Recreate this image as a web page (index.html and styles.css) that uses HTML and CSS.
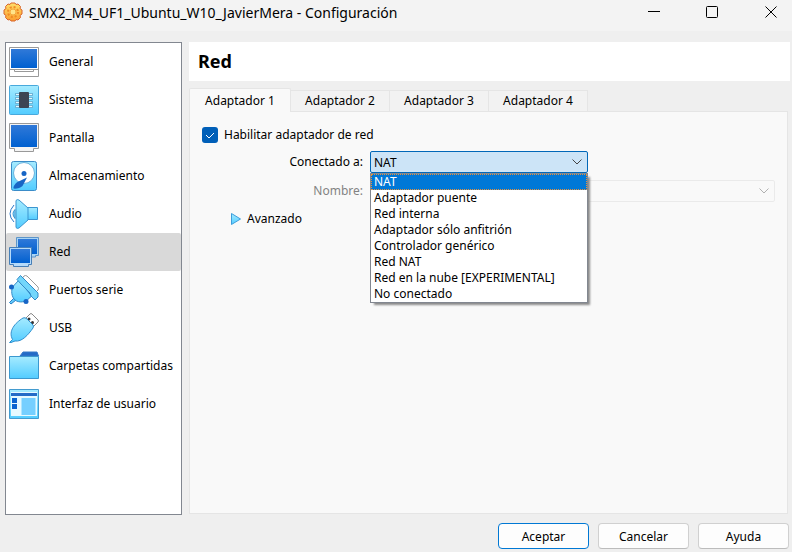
FILE: index.html
```html
<!DOCTYPE html>
<html lang="es">
<head>
<meta charset="utf-8">
<meta name="viewport" content="width=device-width, initial-scale=1">
<title>SMX2_M4_UF1_Ubuntu_W10_JavierMera - Configuración</title>
<link rel="stylesheet" href="styles.css">
</head>
<body>
<svg class="defs" aria-hidden="true">
  <defs>
    <linearGradient id="sky" x1="0" y1="0" x2="0" y2="1"><stop offset="0" stop-color="#a6ebff"/><stop offset="1" stop-color="#52ccff"/></linearGradient>
    <linearGradient id="blue" x1="0" y1="0" x2="0" y2="1"><stop offset="0" stop-color="#3079d8"/><stop offset="1" stop-color="#0060d0"/></linearGradient>
    <linearGradient id="gold" x1="0" y1="0" x2="0" y2="1"><stop offset="0" stop-color="#ffdf6a"/><stop offset="1" stop-color="#fb9e30"/></linearGradient>
  </defs>
</svg>
<div class="window">
  <header class="titlebar">
    <svg class="app-icon" viewBox="0 0 20 20" aria-hidden="true">
      <path d="M8 1h4l1 1.500 2-.5 2.500 2.500-.5 2L19 8v4l-2 1.500.5 2L15 18l-2-.5-1 1.500H8l-1-1.500-2 .5-2.500-2.500.5-2L1 12V8l2-1.500-.5-2L5 2l2 .5z" fill="url(#gold)" stroke="#d9652a" stroke-linejoin="round"/>
      <circle cx="10" cy="10" r="5" fill="none" stroke="#f08a24" stroke-width="2" stroke-dasharray="2 1.930"/>
      <circle cx="10" cy="10" r="3" fill="#ffe48a" stroke="#f5a83c"/>
    </svg>
    <h1 class="title">SMX2_M4_UF1_Ubuntu_W10_JavierMera - Configuración</h1>
    <div class="window-controls">
      <button type="button" aria-label="Minimizar"><svg viewBox="0 0 12 12"><path d="M0 5.500h12"/></svg></button>
      <button type="button" aria-label="Maximizar"><svg viewBox="0 0 12 12"><rect x=".5" y=".5" width="11" height="11" rx="1"/></svg></button>
      <button type="button" aria-label="Cerrar"><svg viewBox="0 0 12 12"><path d="M.5.5l11 11M11.500.5l-11 11"/></svg></button>
    </div>
  </header>

  <div class="body">
    <nav class="sidebar" aria-label="Secciones">
      <a href="#general"><svg viewBox="0 0 30 30"><path d="M.5.5h29v29H.5z" fill="#fff" stroke="#999"/><path d="M2 2h26v19H2z" fill="url(#blue)"/><path d="M1 22.500h28M5.500 22.500v2h19v-2" fill="none" stroke="#999"/></svg>General</a>
      <a href="#sistema"><svg viewBox="0 0 30 30"><rect x=".5" y=".5" width="29" height="29" rx="1" fill="url(#sky)" stroke="#48a9dc"/><path d="M6 9.500h18M6 13.500h18M6 17.500h18M6 21.500h18" stroke="#6fb4d6" stroke-width="3"/><path d="M7 9.500h16M7 13.500h16M7 17.500h16M7 21.500h16" stroke="#e6f8ff"/><rect x="10" y="7" width="10" height="16" rx="1" fill="#3d4553"/></svg>Sistema</a>
      <a href="#pantalla"><svg viewBox="0 0 30 30"><path d="M.5.5h29v25h-5v3h-19v-3h-5z" fill="#f4f4f4" stroke="#999"/><path d="M2 2h26v22H2z" fill="url(#blue)"/></svg>Pantalla</a>
      <a href="#almacenamiento"><svg viewBox="0 0 30 30"><rect x="2.500" y=".5" width="25" height="29" rx="2" fill="url(#sky)" stroke="#3b8cc8"/><circle cx="15" cy="12" r="10.500" fill="#fff" stroke="#6ab2dd"/><circle cx="15" cy="12.500" r="2.500" fill="#1765c5"/><path d="M18 16.500L13.500 25c-1.500 2-7 3-9 2.500-.5-2 2-5.500 4-6.500z" fill="#1765c5"/></svg>Almacenamiento</a>
      <a href="#audio"><svg viewBox="0 0 30 30"><path d="M18 8.500h10.500v12H18z" fill="url(#sky)" stroke="#3b95d0"/><path d="M7 1.500q1-1.500 3-.5l9 8v12l-9 8q-2 1-3-.5z" fill="url(#sky)" stroke="#3b95d0"/><path d="M6 10.500q-4 4 0 9z" fill="#92dfff" stroke="#3b95d0"/><path d="M5 6q-8 9 0 17" fill="none" stroke="#2d78c8"/></svg>Audio</a>
      <a href="#red" class="selected" aria-current="page"><svg viewBox="0 0 30 30"><path d="M7.500.5h22v18h-3v1.500h-16v-1.500h-3z" fill="#a8d4f5" stroke="#5e95c8"/><path d="M9 2h19v15H9z" fill="url(#blue)"/><path d="M.5 10.500h22v17h-3v2h-15v-2h-4z" fill="#b5dafa" stroke="#477fb7"/><path d="M2 12h19v14H2z" fill="url(#blue)"/></svg>Red</a>
      <a href="#puertos"><svg viewBox="0 0 30 30"><path d="M13 3.500l2-2.500q1.500-1 3 0l11 11q1 1.500 0 3l-2 2z" fill="#fff" stroke="#999"/><path d="M5 23l-4.500 4.500 1.500 1.500L7 25" fill="#60c9fa" stroke="#287fc7"/><path d="M10 5L3.500 12c-2 6 0 12 4 14 5 2 10 1 15-5z" fill="url(#sky)" stroke="#318ac8"/><path d="M8 4.500L11.500.5 29 18v4l-3 3-4-4-1-3L12 9z" fill="#72d6fb" stroke="#318ac8" stroke-linejoin="round"/><circle cx="2.500" cy="12" r="2.500" fill="#1765c5"/><circle cx="17" cy="26.500" r="2.500" fill="#1765c5"/></svg>Puertos serie</a>
      <a href="#usb"><svg viewBox="0 0 30 30"><path d="M16 6l5-5q1-1 2 0l6 6q1 1 0 2l-5 5z" fill="#fff" stroke="#888"/><circle cx="20" cy="6" r="1.500" fill="#333"/><circle cx="23.500" cy="9.500" r="1.500" fill="#333"/><path d="M.5 29.500l3-3C-1 18 6 10 14 5q2-1 4 1l6 6q1 1 0 3c-5 7-11 14-18 13l-4 1.500z" fill="url(#sky)" stroke="#318fce"/></svg>USB</a>
      <a href="#carpetas"><svg viewBox="0 0 30 30"><path d="M11 5l3-4h14l1.500 4z" fill="#246bc7" stroke="#3479c8"/><path d="M.5 5.500h29v22H.5z" fill="url(#sky)" stroke="#3b98cf"/></svg>Carpetas compartidas</a>
      <a href="#interfaz"><svg viewBox="0 0 30 30"><path d="M.5.5h29v29H.5z" fill="url(#sky)" stroke="#439bcf"/><path d="M2 3h26v24H2z" fill="#e5f9ff"/><path d="M2 4h26v3H2z" fill="#246bc7"/><path d="M3 9h5v5H3zM3 15h5v5H3z" fill="#0864d0"/><path d="M12.500 9h14v17h-14z" fill="#75cfff"/></svg>Interfaz de usuario</a>
    </nav>

    <main class="content">
      <h2 class="heading">Red</h2>
      <div class="tabs" role="tablist">
        <button type="button" role="tab" aria-selected="true">Adaptador 1</button>
        <button type="button" role="tab" aria-selected="false">Adaptador 2</button>
        <button type="button" role="tab" aria-selected="false">Adaptador 3</button>
        <button type="button" role="tab" aria-selected="false">Adaptador 4</button>
      </div>
      <section class="panel" role="tabpanel">
        <label class="enable"><input type="checkbox" checked>Habilitar adaptador de red</label>
        <div class="form">
          <label for="attached">Conectado a:</label>
          <div class="combo open">
            <select id="attached"><option>NAT</option></select>
            <svg class="chevron" viewBox="0 0 10 6"><path d="M.5.5L5 5 9.500.5"/></svg>
            <ul class="menu" role="listbox" aria-label="Conectado a">
              <li role="option" aria-selected="true">NAT</li>
              <li role="option">Adaptador puente</li>
              <li role="option">Red interna</li>
              <li role="option">Adaptador sólo anfitrión</li>
              <li role="option">Controlador genérico</li>
              <li role="option">Red NAT</li>
              <li role="option">Red en la nube [EXPERIMENTAL]</li>
              <li role="option">No conectado</li>
            </ul>
          </div>
          <label for="name" class="disabled">Nombre:</label>
          <div class="combo">
            <select id="name" disabled></select>
            <svg class="chevron" viewBox="0 0 10 6"><path d="M.5.5L5 5 9.500.5"/></svg>
          </div>
        </div>
        <button type="button" class="advanced" aria-expanded="false"><svg viewBox="0 0 10 12"><path d="M.5.5L9.500 6l-9 5.500z" fill="url(#sky)" stroke="#3d9ddb"/></svg>Avanzado</button>
      </section>
    </main>
  </div>

  <footer class="actions">
    <button type="button" class="primary">Aceptar</button>
    <button type="button">Cancelar</button>
    <button type="button">Ayuda</button>
  </footer>
</div>
</body>
</html>
```
FILE: styles.css
```css
* {
  box-sizing: border-box;
}

body {
  margin: 0;
  background: #efefef;
  color: #000;
  font: 12px/18px "Noto Sans", sans-serif;
}

button,
select {
  font: inherit;
  color: inherit;
}

.defs {
  position: absolute;
  width: 0;
  height: 0;
}

.window {
  display: flex;
  flex-direction: column;
  min-height: 100vh;
}

/* Title bar */
.titlebar {
  display: flex;
  align-items: flex-start;
  height: 31px;
  padding-left: 3px;
  background: #f3f3f3;
}

.app-icon {
  width: 20px;
  height: 20px;
  margin: 2px 6px 0 0;
}

.title {
  flex: 1;
  margin: 0;
  font: 14px/26px "Noto Sans", sans-serif;
  white-space: nowrap;
}

.window-controls {
  display: flex;
}

.window-controls button {
  display: grid;
  place-items: center;
  width: 58px;
  height: 24px;
  padding: 0;
  border: 0;
  background: none;
}

.window-controls button:last-child {
  width: 43px;
  margin-left: 8px;
}

.window-controls svg {
  width: 12px;
  height: 12px;
  fill: none;
  stroke: #000;
}

/* Section list and page */
.body {
  display: flex;
  flex: 1;
  gap: 7px;
  padding: 11px 2px 0 5px;
}

.sidebar {
  flex: 0 0 177px;
  border: 1px solid #828790;
  background: #fff;
}

.sidebar a {
  display: flex;
  align-items: center;
  gap: 10px;
  height: 38px;
  padding-left: 3px;
  border-radius: 2px;
  color: #000;
  line-height: 38px;
  text-decoration: none;
  white-space: nowrap;
}

.sidebar svg {
  width: 30px;
  height: 30px;
}

.sidebar .selected {
  background: #d9d9d9;
}

.content {
  display: flex;
  flex: 1;
  flex-direction: column;
}

.heading {
  margin: 0 0 7px;
  padding-left: 9px;
  background: #fff;
  font-size: 18px;
  line-height: 39px;
}

.tabs {
  display: flex;
  align-items: flex-end;
  height: 24px;
  margin-bottom: -1px;
}

.tabs button {
  width: 99px;
  height: 22px;
  padding: 0;
  border: 1px solid #e5e5e5;
  border-left: 0;
  background: #f2f2f2;
}

.tabs [aria-selected="true"] {
  z-index: 1;
  width: 102px;
  height: 24px;
  border-left: 1px solid #e5e5e5;
  border-bottom: 0;
  border-radius: 2px 2px 0 0;
  background: #f9f9f9;
}

.panel {
  flex: 1;
  margin: 0 2px 1px 0;
  padding: 14px 12px;
  border: 1px solid #e5e5e5;
  background: #f9f9f9;
}

.enable {
  display: flex;
  align-items: center;
  gap: 6px;
}

.enable input {
  appearance: none;
  width: 16px;
  height: 16px;
  margin: 0;
  border-radius: 3px;
  background: #005fb8 url("data:image/svg+xml,%3Csvg xmlns='http://www.w3.org/2000/svg' viewBox='0 0 16 16'%3E%3Cpath d='M4 8l3 3 5-5' fill='none' stroke='white'/%3E%3C/svg%3E");
}

.form {
  display: grid;
  grid-template-columns: 161px 1fr;
  gap: 7px;
  align-items: center;
  margin-top: 7px;
}

.form > label {
  line-height: 22px;
  text-align: right;
}

.form .disabled {
  color: #838383;
}

.combo {
  position: relative;
  height: 22px;
}

.combo select {
  display: block;
  appearance: none;
  width: 100%;
  height: 100%;
  padding: 1px 3px 0;
  border: 1px solid #e5e5e5;
  border-radius: 2px;
  background: #f9f9f9;
}

.combo.open {
  width: 218px;
}

.open select {
  border-color: #0067b8;
  background: #cce4f7;
}

.chevron {
  position: absolute;
  top: 8px;
  right: 6px;
  width: 10px;
  height: 6px;
  fill: none;
  stroke: #b0b0b0;
}

.open .chevron {
  stroke: #444;
}

.menu {
  position: absolute;
  z-index: 2;
  top: 100%;
  left: 0;
  width: 100%;
  margin: 0;
  padding: 0;
  border: 1px solid #828790;
  background: #fff;
  box-shadow: 3px 3px 2px -1px #8a8a8a;
  line-height: 16px;
  list-style: none;
}

.menu li {
  height: 16px;
  padding-left: 3px;
  white-space: nowrap;
}

.menu [aria-selected="true"] {
  outline: 1px dotted #e8913a;
  outline-offset: -1px;
  background: #0078d7;
  color: #fff;
}

.advanced {
  display: flex;
  align-items: center;
  gap: 6px;
  margin: 8px 0 0 29px;
  padding: 0;
  border: 0;
  background: none;
}

.advanced svg {
  width: 10px;
  height: 12px;
}

/* Dialog buttons */
.actions {
  display: flex;
  justify-content: flex-end;
  gap: 9px;
  padding: 8px 3px 3px;
}

.actions button {
  width: 91px;
  height: 26px;
  padding: 1px 0 0;
  border: 1px solid #d0d0d0;
  border-bottom-color: #bcbcbc;
  border-radius: 4px;
  background: #fdfdfd;
}

.actions .primary {
  border-color: #0078d4;
}
```
